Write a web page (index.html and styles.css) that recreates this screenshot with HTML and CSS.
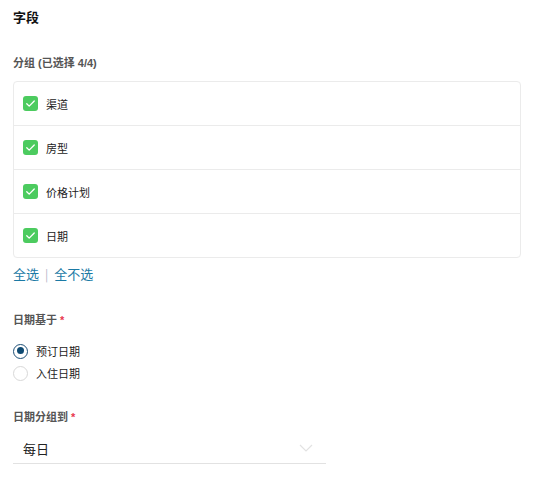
FILE: index.html
```html
<!DOCTYPE html>
<html>
<head>
<meta charset="utf-8">
<link rel="stylesheet" href="styles.css">
</head>
<body>
<div class="panel">
  <h2 class="title">字段</h2>
  <div class="label">分组 (已选择 4/4)</div>
  <div class="list">
    <div class="row"><span class="check"><svg viewBox="0 0 16 16" width="15" height="15"><path d="M4 8.2l2.6 2.6L12 5.4" fill="none" stroke="#fff" stroke-width="1.4" stroke-linecap="round" stroke-linejoin="round"/></svg></span><span class="row-text">渠道</span></div>
    <div class="row"><span class="check"><svg viewBox="0 0 16 16" width="15" height="15"><path d="M4 8.2l2.6 2.6L12 5.4" fill="none" stroke="#fff" stroke-width="1.4" stroke-linecap="round" stroke-linejoin="round"/></svg></span><span class="row-text">房型</span></div>
    <div class="row"><span class="check"><svg viewBox="0 0 16 16" width="15" height="15"><path d="M4 8.2l2.6 2.6L12 5.4" fill="none" stroke="#fff" stroke-width="1.4" stroke-linecap="round" stroke-linejoin="round"/></svg></span><span class="row-text">价格计划</span></div>
    <div class="row"><span class="check"><svg viewBox="0 0 16 16" width="15" height="15"><path d="M4 8.2l2.6 2.6L12 5.4" fill="none" stroke="#fff" stroke-width="1.4" stroke-linecap="round" stroke-linejoin="round"/></svg></span><span class="row-text">日期</span></div>
  </div>
  <div class="links"><a class="link">全选</a><span class="sep">|</span><a class="link">全不选</a></div>

  <div class="label label-date">日期基于 <span class="req">*</span></div>
  <div class="radios">
    <div class="radio-row"><span class="radio on"></span><span class="radio-text">预订日期</span></div>
    <div class="radio-row"><span class="radio"></span><span class="radio-text">入住日期</span></div>
  </div>

  <div class="label label-group">日期分组到 <span class="req">*</span></div>
  <div class="select">
    <span class="select-text">每日</span>
    <svg class="chev" viewBox="0 0 14 8" width="14" height="8"><path d="M1 1l6 6 6-6" fill="none" stroke="#e2e2e2" stroke-width="1.2"/></svg>
  </div>
</div>
</body>
</html>
```

FILE: styles.css
```css
html, body {
  margin: 0;
  padding: 0;
  background: #fff;
}
body {
  font-family: "Noto Sans CJK SC", "Liberation Sans", sans-serif;
  color: #222;
}
.panel {
  padding: 9px 0 0 13px;
  width: 508px;
}
.title {
  margin: 0;
  font-size: 13px;
  font-weight: bold;
  line-height: 16px;
  color: #111;
}
.label {
  font-family: "Liberation Sans", "Noto Sans CJK SC", sans-serif;
  font-size: 11px;
  font-weight: bold;
  color: #555;
  line-height: 14px;
}
.title + .label {
  margin-top: 31px;
}
.list {
  margin-top: 11px;
  border: 1px solid #ebebeb;
  border-radius: 4px;
}
.row {
  height: 43px;
  display: flex;
  align-items: center;
  padding-left: 9px;
  border-top: 1px solid #ebebeb;
}
.row:first-child {
  border-top: none;
  height: 43px;
}
.check {
  width: 15px;
  height: 15px;
  border-radius: 3px;
  background: #4ccb5f;
  display: flex;
}
.row-text {
  margin-left: 8px;
  font-size: 11px;
  color: #222;
}
.links {
  margin-top: 7px;
  font-size: 13px;
  line-height: 18px;
  display: flex;
  align-items: center;
}
.link {
  color: #1b7aa5;
}
.sep {
  color: #b5b5c8;
  font-size: 12px;
  margin: 0 6px;
}
.label-date {
  margin-top: 30px;
}
.req {
  color: #e8384f;
}
.radios {
  margin-top: 13px;
}
.radio-row {
  display: flex;
  align-items: center;
  height: 22px;
  line-height: 16px;
}
.radio {
  width: 15px;
  height: 15px;
  box-sizing: border-box;
  border: 1px solid #d8d8d8;
  border-radius: 50%;
  background: #fff;
  position: relative;
}
.radio.on {
  border: 1.5px solid #1d4f76;
}
.radio.on::after {
  content: "";
  position: absolute;
  left: 2.5px;
  top: 2.5px;
  width: 7px;
  height: 7px;
  border-radius: 50%;
  background: #0f4a72;
}
.radio-text {
  margin-left: 8px;
  font-size: 11px;
  color: #222;
}
.label-group {
  margin-top: 26px;
}
.select {
  margin-top: 9px;
  width: 313px;
  height: 31px;
  border-bottom: 1px solid #e2e2e2;
  display: flex;
  align-items: center;
  justify-content: space-between;
  box-sizing: border-box;
  padding: 0 13px 0 10px;
}
.select-text {
  font-size: 13px;
  color: #222;
}
.chev {
  display: block;
}
```
